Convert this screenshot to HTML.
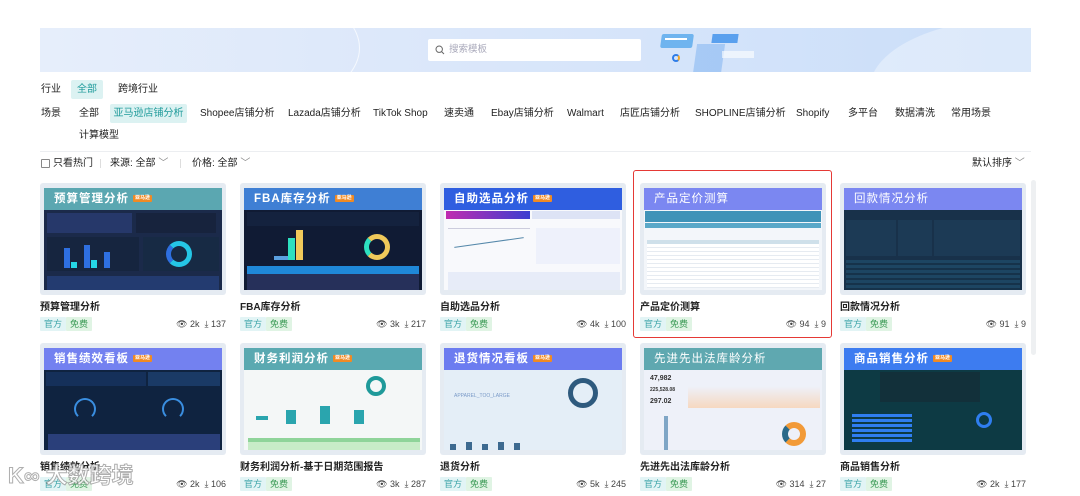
<!DOCTYPE html>
<html><head><meta charset="utf-8"><style>
*{margin:0;padding:0;box-sizing:border-box}
body{width:1080px;height:496px;background:#fff;font-family:"Liberation Sans","Noto Sans CJK SC",sans-serif;color:#222;position:relative;overflow:hidden;font-size:10px;line-height:12px}
.a{position:absolute;white-space:nowrap;line-height:12px}
.banner{left:40px;top:28px;width:991px;height:44px;background:linear-gradient(90deg,#e6eefb 0%,#dbe7fa 40%,#d3e3fa 70%,#c9ddf8 100%);overflow:hidden}
.search{left:428px;top:39px;width:213px;height:22px;background:#fff;border-radius:2px;color:#aab;font-size:9.5px;padding:5px 0 0 21px}
.sel{background:#dcf2f2;color:#1f9b9b;border-radius:2px}
.card{position:absolute;width:186px}
.th{position:absolute;left:0;top:0;width:186px;height:112px;background:#e5ebf2;border-radius:3px;padding:5px 4px 5px 4px}
.img{width:100%;height:100%;position:relative;overflow:hidden}
.hd{height:22px;color:#fff;font-size:11.5px;font-weight:bold;padding:5px 0 0 10px;letter-spacing:1px;line-height:13px}
.badge{display:inline-block;background:#f08a24;color:#fff;font-size:5px;line-height:7px;padding:0 2px;vertical-align:middle;margin-left:4px;border-radius:1px;letter-spacing:0}
.tt{position:absolute;left:0;top:119px;font-size:10px;font-weight:bold;color:#222;white-space:nowrap}
.tg{position:absolute;top:134px;height:14px;font-size:9px;line-height:12px;padding:1px 4px;border-radius:1px}
.t1{left:0;background:#e2f4f5;color:#3aa3a8}
.t2{left:26px;background:#e0f4e4;color:#3a9a55}
.st{position:absolute;right:0;top:135px;font-size:9px;color:#444;white-space:nowrap}
.bd{position:absolute;left:0;right:0;top:22px;bottom:0}
</style></head><body>

<div class="a banner">
 <div style="position:absolute;left:-40px;top:-60px;width:360px;height:160px;border-radius:50%;border:1px solid rgba(255,255,255,.7)"></div>
 <div style="position:absolute;left:830px;top:-10px;width:300px;height:140px;border-radius:50%;background:rgba(255,255,255,.35)"></div>
 <div style="position:absolute;left:621px;top:6px;width:32px;height:14px;background:#6fb4ef;transform:skewX(-8deg);border-radius:2px"></div>
 <div style="position:absolute;left:625px;top:10px;width:22px;height:2px;background:#fff"></div>
 <div style="position:absolute;left:655px;top:16px;width:28px;height:30px;background:rgba(130,180,240,.55);transform:skewX(-8deg)"></div>
 <div style="position:absolute;left:672px;top:6px;width:26px;height:9px;background:#5aa0ee;transform:skewX(-8deg)"></div>
 <div style="position:absolute;left:682px;top:23px;width:32px;height:7px;background:rgba(255,255,255,.6)"></div>
 <div style="position:absolute;left:632px;top:26px;width:8px;height:8px;border-radius:50%;border:2px solid #2f7de8;border-right-color:#f5a623"></div>
</div>
<div class="a search"><svg style="position:absolute;left:7px;top:6px" width="10" height="10" viewBox="0 0 10 10"><circle cx="4.2" cy="4.2" r="3.2" fill="none" stroke="#666" stroke-width="1"/><path d="M6.6 6.6L9 9" stroke="#666" stroke-width="1"/></svg>搜索模板</div>

<div class="a" style="left:41px;top:84px">行业</div>
<div class="a sel" style="left:71px;top:80px;width:32px;height:19px;padding-top:4px;text-align:center">全部</div>
<div class="a" style="left:118px;top:84px">跨境行业</div>

<div class="a" style="left:41px;top:108px">场景</div>
<div class="a" style="left:79px;top:108px">全部</div>
<div class="a sel" style="left:110px;top:104px;width:77px;height:19px;padding-top:4px;text-align:center">亚马逊店铺分析</div>
<div class="a" style="left:200px;top:108px">Shopee店铺分析</div>
<div class="a" style="left:288px;top:108px">Lazada店铺分析</div>
<div class="a" style="left:373px;top:108px">TikTok Shop</div>
<div class="a" style="left:444px;top:108px">速卖通</div>
<div class="a" style="left:491px;top:108px">Ebay店铺分析</div>
<div class="a" style="left:567px;top:108px">Walmart</div>
<div class="a" style="left:620px;top:108px">店匠店铺分析</div>
<div class="a" style="left:695px;top:108px">SHOPLINE店铺分析</div>
<div class="a" style="left:796px;top:108px">Shopify</div>
<div class="a" style="left:848px;top:108px">多平台</div>
<div class="a" style="left:895px;top:108px">数据清洗</div>
<div class="a" style="left:951px;top:108px">常用场景</div>
<div class="a" style="left:79px;top:130px">计算模型</div>
<div class="a" style="left:40px;top:151px;width:991px;height:1px;background:#eceef1"></div>

<div class="a" style="left:41px;top:159px;width:9px;height:9px;border:1px solid #888;border-radius:1px"></div>
<div class="a" style="left:53px;top:158px">只看热门</div>
<div class="a" style="left:100px;top:159px;width:1px;height:9px;background:#ddd"></div>
<div class="a" style="left:110px;top:158px">来源: 全部 <span style="color:#888">﹀</span></div>
<div class="a" style="left:180px;top:159px;width:1px;height:9px;background:#ddd"></div>
<div class="a" style="left:192px;top:158px">价格: 全部 <span style="color:#888">﹀</span></div>
<div class="a" style="left:972px;top:158px">默认排序 <span style="color:#888">﹀</span></div>

<div class="a" style="left:1031px;top:180px;width:5px;height:175px;background:#eef0f2;border-radius:3px"></div>

<div class="a" style="left:633px;top:170px;width:199px;height:168px;border:1.5px solid #e53935;border-radius:3px"></div>

<!-- Row 1 -->
<div class="card" style="left:40px;top:183px"><div class="th"><div class="img" style="background:#1b2a4a"><div class="hd" style="background:#5ba7b1">预算管理分析<span class="badge">亚马逊</span></div><div class="bd">
<div class="a" style="left:3px;top:3px;width:85px;height:20px;background:#26386a"></div><div class="a" style="left:92px;top:3px;width:80px;height:20px;background:#17233d"></div>
<div class="a" style="left:3px;top:27px;width:92px;height:34px;background:#16253f"></div>
<div class="a" style="left:20px;top:38px;width:6px;height:20px;background:#2e6fe0"></div><div class="a" style="left:40px;top:35px;width:6px;height:23px;background:#2e6fe0"></div><div class="a" style="left:60px;top:42px;width:6px;height:16px;background:#2e6fe0"></div><div class="a" style="left:27px;top:52px;width:6px;height:6px;background:#25d6e6"></div><div class="a" style="left:47px;top:50px;width:6px;height:8px;background:#25d6e6"></div>
<div class="a" style="left:99px;top:27px;width:76px;height:34px;background:#172a44"></div><div class="a" style="left:122px;top:31px;width:26px;height:26px;border-radius:50%;border:5px solid #25c6e6;border-left-color:#2e6fe0"></div>
<div class="a" style="left:3px;top:66px;width:172px;height:20px;background:#233b70"></div></div></div></div>
<div class="tt">预算管理分析</div><span class="tg t1">官方</span><span class="tg t2">免费</span><div class="st">👁 2k &nbsp;⤓ 137</div></div>

<div class="card" style="left:240px;top:183px"><div class="th"><div class="img" style="background:#101b34"><div class="hd" style="background:#3f7fd4">FBA库存分析<span class="badge">亚马逊</span></div><div class="bd">
<div class="a" style="left:3px;top:2px;width:172px;height:14px;background:#14223e"></div>
<div class="a" style="left:44px;top:28px;width:7px;height:22px;background:#2de0c0"></div><div class="a" style="left:52px;top:20px;width:7px;height:30px;background:#f0c95a"></div><div class="a" style="left:30px;top:46px;width:14px;height:4px;background:#5aa0e0"></div>
<div class="a" style="left:120px;top:24px;width:26px;height:26px;border-radius:50%;border:5px solid #f0c95a;border-left-color:#2de0c0"></div>
<div class="a" style="left:3px;top:56px;width:172px;height:8px;background:#1f88d8"></div><div class="a" style="left:3px;top:64px;width:172px;height:22px;background:#26305a"></div></div></div></div>
<div class="tt">FBA库存分析</div><span class="tg t1">官方</span><span class="tg t2">免费</span><div class="st">👁 3k &nbsp;⤓ 217</div></div>

<div class="card" style="left:440px;top:183px"><div class="th"><div class="img" style="background:#f8f9fc"><div class="hd" style="background:#2f5ee0">自助选品分析<span class="badge">亚马逊</span></div><div class="bd">
<div class="a" style="left:2px;top:1px;width:84px;height:8px;background:linear-gradient(90deg,#c02bb0,#3b3fd0)"></div><div class="a" style="left:88px;top:1px;width:88px;height:8px;background:#dde3f5"></div>
<div class="a" style="left:4px;top:18px;width:82px;height:36px;border-top:1px solid #ccd"></div><div class="a" style="left:10px;top:32px;width:70px;height:1px;background:#58a;transform:rotate(-8deg)"></div>
<div class="a" style="left:92px;top:18px;width:84px;height:36px;background:#eef1fb"></div><div class="a" style="left:4px;top:62px;width:172px;height:24px;background:#e7ecf8"></div></div></div></div>
<div class="tt">自助选品分析</div><span class="tg t1">官方</span><span class="tg t2">免费</span><div class="st">👁 4k &nbsp;⤓ 100</div></div>

<div class="card" style="left:640px;top:183px"><div class="th"><div class="img" style="background:#f3f6fa"><div class="hd" style="background:#7b87f1;font-weight:normal">产品定价测算</div><div class="bd">
<div class="a" style="left:1px;top:1px;width:176px;height:11px;background:#3f93b8"></div><div class="a" style="left:1px;top:13px;width:176px;height:5px;background:#5aa8c8"></div>
<div class="a" style="left:3px;top:30px;width:172px;height:48px;background:repeating-linear-gradient(180deg,#fff 0 3px,#e6ebf1 3px 4px)"></div><div class="a" style="left:3px;top:30px;width:172px;height:4px;background:#cfe0ea"></div></div></div></div>
<div class="tt">产品定价测算</div><span class="tg t1">官方</span><span class="tg t2">免费</span><div class="st">👁 94 &nbsp;⤓ 9</div></div>

<div class="card" style="left:840px;top:183px"><div class="th"><div class="img" style="background:#18314a"><div class="hd" style="background:#7b87f1;font-weight:normal">回款情况分析</div><div class="bd">
<div class="a" style="left:2px;top:10px;width:50px;height:36px;background:#1c3a55"></div><div class="a" style="left:54px;top:10px;width:34px;height:36px;background:#1c3a55"></div><div class="a" style="left:90px;top:10px;width:86px;height:36px;background:#1c3a55"></div>
<div class="a" style="left:2px;top:50px;width:174px;height:36px;background:repeating-linear-gradient(180deg,#1d4562 0 3px,#16324a 3px 5px)"></div></div></div></div>
<div class="tt">回款情况分析</div><span class="tg t1">官方</span><span class="tg t2">免费</span><div class="st">👁 91 &nbsp;⤓ 9</div></div>

<!-- Row 2 -->
<div class="card" style="left:40px;top:343px"><div class="th"><div class="img" style="background:#0f2340"><div class="hd" style="background:#7381f0">销售绩效看板<span class="badge">亚马逊</span></div><div class="bd">
<div class="a" style="left:2px;top:2px;width:100px;height:14px;background:#15305a"></div><div class="a" style="left:104px;top:2px;width:72px;height:14px;background:#1a3a66"></div>
<div class="a" style="left:30px;top:28px;width:22px;height:22px;border-radius:50%;border:2px solid #3a8ee0;border-bottom-color:transparent"></div><div class="a" style="left:118px;top:28px;width:22px;height:22px;border-radius:50%;border:2px solid #3a8ee0;border-bottom-color:transparent"></div>
<div class="a" style="left:4px;top:64px;width:172px;height:22px;background:#2a3f7a"></div></div></div></div>
<div class="tt">销售绩效分析</div><span class="tg t1">官方</span><span class="tg t2">免费</span><div class="st">👁 2k &nbsp;⤓ 106</div></div>

<div class="card" style="left:240px;top:343px"><div class="th"><div class="img" style="background:#f4f7f7"><div class="hd" style="background:#5aa9b1">财务利润分析<span class="badge">亚马逊</span></div><div class="bd">
<div class="a" style="left:122px;top:6px;width:20px;height:20px;border-radius:50%;border:4px solid #1f9a9a"></div>
<div class="a" style="left:42px;top:40px;width:10px;height:14px;background:#2aa5ae"></div><div class="a" style="left:76px;top:36px;width:10px;height:18px;background:#2aa5ae"></div><div class="a" style="left:110px;top:40px;width:10px;height:14px;background:#2aa5ae"></div><div class="a" style="left:12px;top:46px;width:12px;height:4px;background:#2aa5ae"></div>
<div class="a" style="left:4px;top:68px;width:172px;height:18px;background:#c8ecc8"></div><div class="a" style="left:4px;top:68px;width:172px;height:4px;background:#8fd49a"></div></div></div></div>
<div class="tt">财务利润分析-基于日期范围报告</div><span class="tg t1">官方</span><span class="tg t2">免费</span><div class="st">👁 3k &nbsp;⤓ 287</div></div>

<div class="card" style="left:440px;top:343px"><div class="th"><div class="img" style="background:#e4eef7"><div class="hd" style="background:#6c7cf0">退货情况看板<span class="badge">亚马逊</span></div><div class="bd">
<div class="a" style="left:10px;top:20px;font-size:5px;color:#7a9ac8">APPAREL_TOO_LARGE</div>
<div class="a" style="left:124px;top:8px;width:30px;height:30px;border-radius:50%;border:5px solid #2e5a7e"></div>
<div class="a" style="left:6px;top:74px;width:6px;height:8px;background:#3d6a90"></div><div class="a" style="left:22px;top:72px;width:6px;height:10px;background:#3d6a90"></div><div class="a" style="left:38px;top:74px;width:6px;height:8px;background:#3d6a90"></div><div class="a" style="left:54px;top:72px;width:6px;height:10px;background:#3d6a90"></div><div class="a" style="left:70px;top:73px;width:6px;height:9px;background:#3d6a90"></div></div></div></div>
<div class="tt">退货分析</div><span class="tg t1">官方</span><span class="tg t2">免费</span><div class="st">👁 5k &nbsp;⤓ 245</div></div>

<div class="card" style="left:640px;top:343px"><div class="th"><div class="img" style="background:#eef1f9"><div class="hd" style="background:#5fa8b0;font-weight:normal">先进先出法库龄分析</div><div class="bd">
<div class="a" style="left:6px;top:3px;font-size:7px;font-weight:bold;color:#333;line-height:11px">47,982<br><span style="font-size:5px">225,528.08</span><br>297.02</div>
<div class="a" style="left:44px;top:2px;width:132px;height:36px;background:linear-gradient(180deg,#eef1f9 40%,#f6d8c0)"></div>
<div class="a" style="left:20px;top:46px;width:4px;height:36px;background:#7fa6c6"></div>
<div class="a" style="left:138px;top:52px;width:24px;height:24px;border-radius:50%;border:6px solid #f29a38;border-left-color:#2a6a8a"></div></div></div></div>
<div class="tt">先进先出法库龄分析</div><span class="tg t1">官方</span><span class="tg t2">免费</span><div class="st">👁 314 &nbsp;⤓ 27</div></div>

<div class="card" style="left:840px;top:343px"><div class="th"><div class="img" style="background:#0d3a44"><div class="hd" style="background:#3d7cf0">商品销售分析<span class="badge">亚马逊</span></div><div class="bd">
<div class="a" style="left:36px;top:2px;width:100px;height:30px;background:#12303a"></div>
<div class="a" style="left:8px;top:44px;width:60px;height:3px;background:#2f7ef0;box-shadow:0 5px 0 #2f7ef0,0 10px 0 #2f7ef0,0 15px 0 #2f7ef0,0 20px 0 #2f7ef0,0 25px 0 #2f7ef0"></div>
<div class="a" style="left:132px;top:42px;width:16px;height:16px;border-radius:50%;border:3px solid #2f7ef0"></div></div></div></div>
<div class="tt">商品销售分析</div><span class="tg t1">官方</span><span class="tg t2">免费</span><div class="st">👁 2k &nbsp;⤓ 177</div></div>

<div class="a" style="left:8px;top:464px;font-size:22px;line-height:24px;color:rgba(255,255,255,.85);-webkit-text-stroke:1px rgba(120,120,120,.6);font-weight:bold">K∞ 大数跨境</div>
</body></html>
